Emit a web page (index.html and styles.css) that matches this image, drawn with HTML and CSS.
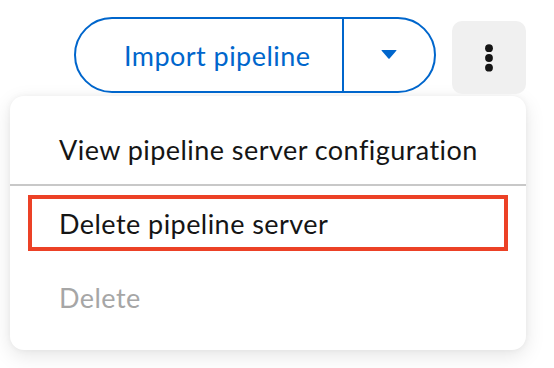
FILE: index.html
```html
<!DOCTYPE html>
<html lang="en">
<head>
<meta charset="utf-8">
<title>Pipeline actions</title>
<link rel="stylesheet" href="styles.css">
</head>
<body>
<div class="page">
  <div class="toolbar">
    <div class="split-btn">
      <button class="split-main" type="button">Import pipeline</button>
      <button class="split-toggle" type="button" aria-label="More import options">
        <svg width="16" height="9" viewBox="0 0 16 9"><path d="M1 0 H15 Q16 0 15.3 0.8 L8.6 8.4 Q8 9 7.4 8.4 L0.7 0.8 Q0 0 1 0 Z" fill="#0066cc"/></svg>
      </button>
    </div>
    <button class="kebab" type="button" aria-label="Actions">
      <svg width="8" height="28" viewBox="0 0 8 28"><circle cx="4" cy="4.2" r="3.9" fill="#151515"/><circle cx="4" cy="14" r="3.9" fill="#151515"/><circle cx="4" cy="23.7" r="3.9" fill="#151515"/></svg>
    </button>
  </div>
  <ul class="menu">
    <li class="menu-item">View pipeline server configuration</li>
    <li class="menu-divider"></li>
    <li class="menu-item menu-item-marked"><span class="marker">Delete pipeline server</span></li>
    <li class="menu-item menu-item-disabled">Delete</li>
  </ul>
</div>
</body>
</html>
```

FILE: styles.css
```css
* { box-sizing: border-box; }

html, body {
  margin: 0;
  padding: 0;
  background: #ffffff;
}

body {
  font-family: Lato, "Liberation Sans", sans-serif;
  font-size: 27px;
  letter-spacing: 0.45px;
  color: #151515;
}

.page {
  width: 554px;
  height: 368px;
  overflow: hidden;
}

.toolbar {
  display: flex;
  justify-content: flex-end;
  align-items: flex-start;
  gap: 16px;
  padding-top: 17px;
  padding-right: 28px;
}

.split-btn {
  display: flex;
  height: 76px;
  border: 2px solid #0066cc;
  border-radius: 38px;
  overflow: hidden;
  background: #fff;
}

.split-btn button {
  font: inherit;
  letter-spacing: inherit;
  background: transparent;
  border: 0;
  margin: 0;
  cursor: pointer;
}

.split-main {
  width: 266px;
  padding: 0 0 0 48px;
  text-align: left;
  color: #0066cc;
}

.split-toggle {
  width: 92px;
  border-left: 2px solid #0066cc !important;
  display: flex;
  align-items: center;
  justify-content: center;
  padding: 0 0 2px 0;
}

.kebab {
  width: 74px;
  height: 73px;
  margin-top: 4px;
  border: 0;
  border-radius: 10px;
  background: #f0f0f0;
  display: flex;
  align-items: center;
  justify-content: center;
  padding: 0;
}

.menu {
  list-style: none;
  margin: 2px 0 0 10px;
  padding: 16px 0;
  width: 516px;
  background: #fff;
  border-radius: 14px;
  box-shadow: 0 6px 20px rgba(0, 0, 0, 0.10), 0 0 6px rgba(0, 0, 0, 0.05);
}

.menu-item {
  height: 74px;
  display: flex;
  align-items: center;
  padding-left: 49px;
  white-space: nowrap;
}

.menu-divider {
  height: 2px;
  margin-top: -2px;
  background: #c8c8c8;
}

.menu-item-marked {
  padding: 9px 18px;
}

.marker {
  flex: 1;
  height: 56px;
  border: 4px solid #ec4126;
  display: flex;
  align-items: center;
  padding-left: 27px;
}

.menu-item-disabled {
  color: #a6a6a6;
}
```
